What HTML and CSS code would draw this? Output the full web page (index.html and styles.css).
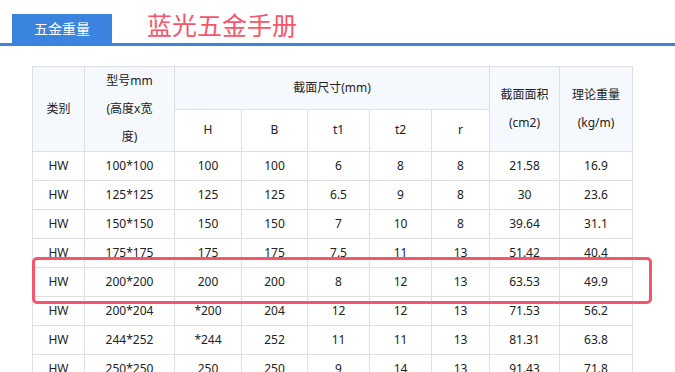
FILE: index.html
```html
<!DOCTYPE html>
<html lang="zh-CN">
<head>
<meta charset="utf-8">
<title>蓝光五金手册</title>
<link rel="stylesheet" href="styles.css">
</head>
<body>
<header class="topbar">
  <div class="tab">五金重量</div>
  <h1 class="title">蓝光五金手册</h1>
</header>
<main class="content">
  <div class="table-wrap">
    <table class="weights">
      <colgroup>
        <col class="c1"><col class="c2"><col class="c3"><col class="c4"><col class="c5"><col class="c6"><col class="c7"><col class="c8"><col class="c9">
      </colgroup>
      <thead>
        <tr class="hrow">
          <th class="hl" rowspan="2">类别</th>
          <th class="hl narrow" rowspan="2">型号mm (高度x宽度)</th>
          <th class="hl" colspan="5">截面尺寸(mm)</th>
          <th class="hl" rowspan="2">截面面积 (cm2)</th>
          <th class="hl" rowspan="2">理论重量 (kg/m)</th>
        </tr>
        <tr class="hrow">
          <th>H</th><th>B</th><th>t1</th><th>t2</th><th>r</th>
        </tr>
      </thead>
      <tbody>
        <tr><td>HW</td><td>100*100</td><td>100</td><td>100</td><td>6</td><td>8</td><td>8</td><td>21.58</td><td>16.9</td></tr>
        <tr><td>HW</td><td>125*125</td><td>125</td><td>125</td><td>6.5</td><td>9</td><td>8</td><td>30</td><td>23.6</td></tr>
        <tr><td>HW</td><td>150*150</td><td>150</td><td>150</td><td>7</td><td>10</td><td>8</td><td>39.64</td><td>31.1</td></tr>
        <tr><td>HW</td><td>175*175</td><td>175</td><td>175</td><td>7.5</td><td>11</td><td>13</td><td>51.42</td><td>40.4</td></tr>
        <tr><td>HW</td><td>200*200</td><td>200</td><td>200</td><td>8</td><td>12</td><td>13</td><td>63.53</td><td>49.9</td></tr>
        <tr><td>HW</td><td>200*204</td><td>*200</td><td>204</td><td>12</td><td>12</td><td>13</td><td>71.53</td><td>56.2</td></tr>
        <tr><td>HW</td><td>244*252</td><td>*244</td><td>252</td><td>11</td><td>11</td><td>13</td><td>81.31</td><td>63.8</td></tr>
        <tr><td>HW</td><td>250*250</td><td>250</td><td>250</td><td>9</td><td>14</td><td>13</td><td>91.43</td><td>71.8</td></tr>
      </tbody>
    </table>
    <div class="highlight"></div>
  </div>
</main>
</body>
</html>
```
FILE: styles.css
```css
html, body {
  margin: 0;
  padding: 0;
  overflow: hidden;
  background: #ffffff;
}

body {
  font-family: "Noto Sans", "Noto Sans CJK SC", sans-serif;
  color: #333333;
}

.topbar {
  display: flex;
  align-items: flex-start;
  padding: 11px 0 0 12px;
  border-bottom: 3px solid #3a84df;
}

.tab {
  margin-top: 3px;
  width: 100px;
  height: 29px;
  line-height: 29px;
  background: #3a84df;
  color: #ffffff;
  text-align: center;
  font-size: 14px;
  font-family: "Noto Sans CJK SC", sans-serif;
}

.title {
  margin: 0 0 0 35px;
  font-size: 25px;
  line-height: 26px;
  font-weight: normal;
  color: #f5566b;
  font-family: "Noto Sans CJK SC", sans-serif;
}

.content {
  padding: 20px 0 0 32px;
}

.table-wrap {
  position: relative;
  width: 600px;
}

.weights {
  width: 600px;
  table-layout: fixed;
  border-collapse: collapse;
  font-size: 12px;
}

.c1 { width: 52px; }
.c2 { width: 90px; }
.c3 { width: 67px; }
.c4 { width: 66px; }
.c5 { width: 62px; }
.c6 { width: 62px; }
.c7 { width: 58px; }
.c8 { width: 70px; }
.c9 { width: 73px; }

.weights th,
.weights td {
  border: 1px solid #e0e0e0;
  text-align: center;
  font-weight: normal;
  line-height: 28px;
  padding: 0 4px;
  color: #222222;
}

.hrow th {
  height: 41px;
}

.weights th.hl {
  background: #f5f9fe;
}

.weights th.narrow {
  padding: 0 18px;
}

.weights td {
  height: 28px;
}

.highlight {
  position: absolute;
  left: 0;
  top: 191px;
  width: 614px;
  height: 41px;
  border: 3px solid #f5566b;
  border-radius: 5px;
  pointer-events: none;
}
```
